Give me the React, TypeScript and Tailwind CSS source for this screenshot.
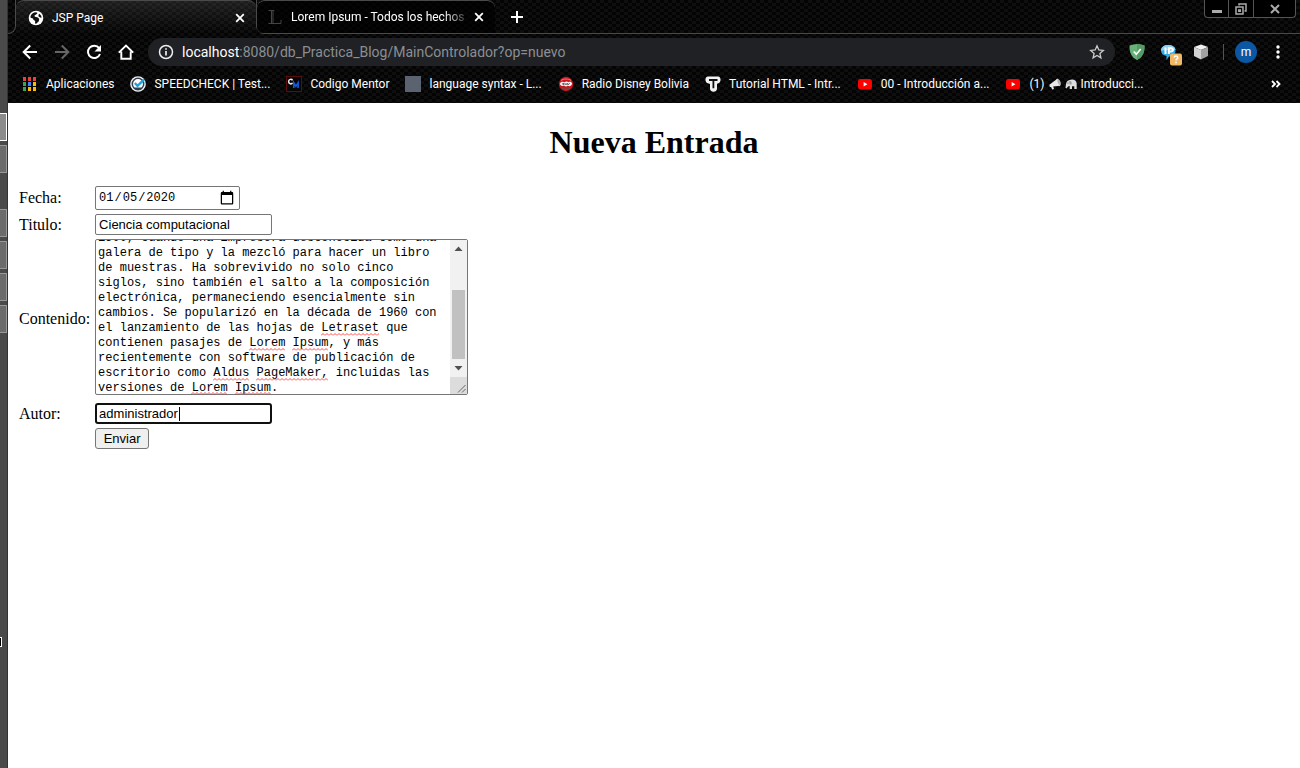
import { useLayoutEffect, useRef, type ReactNode } from "react";

const contenido =
  "Lorem Ipsum es simplemente el texto de relleno de las imprentas y archivos de texto. Lorem Ipsum ha sido el texto de relleno estándar de la industria desde el año\n1500, cuando una impresora desconocida como una galera de tipo y la mezcló para hacer un libro de muestras. Ha sobrevivido no solo cinco siglos, sino también el salto a la composición electrónica, permaneciendo esencialmente sin cambios. Se popularizó en la década de 1960 con el lanzamiento de las hojas de Letraset que contienen pasajes de Lorem Ipsum, y más recientemente con software de publicación de escritorio como Aldus PageMaker, incluidas las versiones de Lorem Ipsum.";

function GlobeIcon() {
  return (
    <svg className="size-4 shrink-0" viewBox="0 0 16 16" aria-hidden="true">
      <circle cx="8" cy="8" r="7.3" fill="#fff" />
      <path d="M2.500 6.200C3.200 4 5.200 2.400 8 2.300L9.600 3 8.200 4.600 6.600 5.200 6.800 6.800l2.600.4 1.800 1.600-.4 2.400-2.600 2.600-1.200-.2.200-2.600-1.800-1.200-.4-1.400-2.400-.6z" fill="#111" />
      <path d="M11.400 3.800l1.800 2 .4 2-1.600-.2-1.600-1.400.2-1.400z" fill="#111" />
    </svg>
  );
}

function CloseIcon() {
  return (
    <svg className="size-4" viewBox="0 0 16 16" fill="none" stroke="#fff" strokeWidth="1.8" aria-hidden="true">
      <path d="M4.2 4.2l7.6 7.6M11.8 4.2l-7.6 7.6" />
    </svg>
  );
}

function Tool({ label, children }: { label: string; children: ReactNode }) {
  return (
    <button type="button" aria-label={label} className="flex size-8 items-center justify-center">
      {children}
    </button>
  );
}

function YoutubeIcon() {
  return (
    <svg className="size-4" viewBox="0 0 16 16" aria-hidden="true">
      <rect x="1" y="3" width="14" height="10.5" rx="2.4" fill="#f00" />
      <path d="M6.6 6v4.400L10.400 8.200z" fill="#fff" />
    </svg>
  );
}

function AppsIcon() {
  const colors = ["#ea4335", "#ea4335", "#ea4335", "#34a853", "#4285f4", "#fbbc05", "#34a853", "#fbbc05", "#fbbc05"];
  return (
    <svg className="size-4" viewBox="0 0 16 16" aria-hidden="true">
      {colors.map((c, i) => (
        <rect key={i} x={1 + (i % 3) * 5} y={1 + Math.floor(i / 3) * 5} width="3" height="4" fill={c} />
      ))}
    </svg>
  );
}

function SpeedIcon() {
  return (
    <svg className="size-4" viewBox="0 0 16 16" aria-hidden="true">
      <circle cx="8" cy="8" r="7.8" fill="#f1f4f6" />
      <circle cx="8" cy="8" r="5.700" fill="#fff" stroke="#33414e" strokeWidth="1.500" />
      <path d="M4.800 7l2.700 2.800L14 3.600" fill="none" stroke="#1e9fe0" strokeWidth="2.400" />
      <path d="M4.500 12.400h7" stroke="#33414e" strokeWidth="1.800" />
    </svg>
  );
}

function MentorIcon() {
  return (
    <svg className="size-4" viewBox="0 0 16 16" fill="none" aria-hidden="true">
      <rect x=".5" y=".5" width="15" height="15" fill="#060606" stroke="#5c0c0c" />
      <path d="M6.500 4.300C5.700 2.700 2.600 3 2.600 5.600s3.100 3 3.900 1.200" stroke="#eee" strokeWidth="1.500" />
      <path d="M7.800 12V6.800l2.100 3.400 2.200-3.400V12" stroke="#1558d6" strokeWidth="1.700" />
    </svg>
  );
}

function RadioIcon() {
  return (
    <svg className="size-4" viewBox="0 0 16 16" fill="none" aria-hidden="true">
      <circle cx="8" cy="8" r="7.200" fill="#c9161d" />
      <path d="M3 4.500C5.500 2.500 10.500 2.500 13 4.500" stroke="#ef7b7e" />
      <path d="M1.800 7.800C3 5 5 5.500 6.500 6.200c1.500-1.200 3-.8 4 0 1.500-.8 3-.4 3.600 1.200-.4 2.600-2.600 3.200-4.200 2.400-1.400 1-2.800.8-3.800-.2-1.800.8-3.600.4-4.300-1.800z" fill="#f4f4f4" />
      <path d="M4 8.200l1.600-1v1.600L7 7.400l1 1.400 1.200-1.600.6 1.600L11.800 7.400" stroke="#444" strokeWidth=".9" />
      <path d="M4.500 12.200c2 1.400 5 1.400 7 0" stroke="#555" strokeWidth="1.400" />
    </svg>
  );
}

function TutorialIcon() {
  return (
    <svg className="size-4" viewBox="0 0 16 16" aria-hidden="true">
      <path d="M3 .5h10c3.400 0 3.400 6.500 0 6.800l-1 .6v4.800c0 3.900-7 3.900-7 0V8L3 7.300C-.4 7 -.4.5 3 .5z" fill="#f2f2f2" />
      <path d="M4 4h8.500M8.400 4v8.200" stroke="#111" strokeWidth="1.800" />
    </svg>
  );
}

function MegaphoneIcon() {
  return (
    <svg className="size-3" viewBox="0 0 12 12" aria-hidden="true">
      <path d="M.4 6.800 8 1l2.800 6.800L4.200 8.600l.8 2.400-1.800.5-1.100-2.600L.8 9z" fill="#e8e8e8" />
      <path d="M8 1c2.800.3 4.300 5 2.800 6.800C9.300 7.500 7.400 3.500 8 1z" fill="#aaa" stroke="#fff" strokeWidth=".6" />
    </svg>
  );
}

function ElephantIcon() {
  return (
    <svg className="size-3" viewBox="0 0 12 12" aria-hidden="true">
      <path d="M4 2.200c3-1.500 7.500-.8 7.700 3.500v5.200H9.300V8.200H7v2.700H4.700V8C3 8 2.600 9 1.500 10.600L.4 9.800C1.200 8 .3 3 4 2.200z" fill="#ddd" />
      <path d="M4.200 3.200c2-.6 3.100 1 2.200 3.300H4.600z" fill="#999" />
      <circle cx="3" cy="5" r=".5" fill="#222" />
    </svg>
  );
}

function Bookmark({ icon, children }: { icon: ReactNode; children: ReactNode }) {
  return (
    <a href="#" className="flex shrink-0 items-center gap-2 whitespace-nowrap">
      {icon}
      <span className="flex items-center gap-1">{children}</span>
    </a>
  );
}

const strip =
  "w-full border-y border-r border-[#999] bg-[#6b6b6b]";

function Squiggle({ className }: { className: string }) {
  return (
    <svg className={`pointer-events-none absolute h-[3px] ${className}`} aria-hidden="true">
      <defs>
        <pattern id="wave" width="4" height="3" patternUnits="userSpaceOnUse">
          <path d="M0 2.500 2 .5 4 2.500" fill="none" stroke="#f33" strokeWidth=".9" />
        </pattern>
      </defs>
      <rect width="100%" height="3" fill="url(#wave)" />
    </svg>
  );
}

const carbon =
  "bg-[#050505] bg-[conic-gradient(#040404_25%,#0e0e0e_0_50%,#040404_0_75%,#0e0e0e_0)] bg-[length:8px_6px]";

export default function App() {
  const area = useRef<HTMLTextAreaElement>(null);
  useLayoutEffect(() => {
    const el = area.current;
    if (el) el.scrollTop = el.scrollHeight - el.clientHeight - 6;
  }, []);

  return (
    <div className="flex min-h-screen bg-white">
      <aside className="flex w-2 shrink-0 flex-col border-r border-[#333] bg-[#4a4a4a] pt-[113px]">
        <div className="h-7 w-full border border-l-0 border-white bg-[#8c8c8c]" />
        <div className={`mt-1 h-7 ${strip}`} />
        <div className={`mt-9 h-7 ${strip}`} />
        <div className={`mt-1 h-7 ${strip}`} />
        <div className={`mt-1 h-7 ${strip}`} />
        <div className={`mt-1 h-7 ${strip}`} />
        <div className="mt-[304px] h-[10px] w-[2px] border border-l-0 border-white bg-black" />
      </aside>

      <div className="flex min-w-0 flex-1 flex-col">
        <header className={`font-[Roboto,'Noto_Sans',sans-serif] text-xs text-white ${carbon}`}>
          <div className="flex h-[34px] items-stretch">
            <div className="w-2 shrink-0 rounded-br-lg border-r border-b border-[#4a4a4a]" />
            <div className="flex w-60 shrink-0 items-center gap-2 rounded-t-lg border-t border-[#4a4a4a] bg-linear-to-b from-white/10 to-transparent pr-2 pl-3">
              <GlobeIcon />
              <span className="flex-1">JSP Page</span>
              <button type="button" aria-label="Cerrar pestaña"><CloseIcon /></button>
            </div>
            <div className="flex flex-1 items-stretch rounded-bl-lg border-b border-l border-[#4a4a4a]">
              <div className="flex w-[238px] shrink-0 items-center rounded-t-lg border-t border-[#4a4a4a] bg-black/60 pr-2 pl-[10px]">
                <svg className="mr-2 size-4 shrink-0" viewBox="0 0 16 16" fill="none" stroke="#444" aria-hidden="true">
                  <path d="M1.500 1.500h6M4.500 1.500v13M1.500 14.500h12.500v-3.500M6 1.500v13" />
                </svg>
                <span className="min-w-0 flex-1 overflow-hidden whitespace-nowrap [mask-image:linear-gradient(to_right,#000_85%,transparent)]">
                  Lorem Ipsum - Todos los hechos
                </span>
                <button type="button" aria-label="Cerrar pestaña"><CloseIcon /></button>
              </div>
              <button type="button" aria-label="Nueva pestaña" className="ml-2 flex w-7 items-center justify-center">
                <svg className="size-4" viewBox="0 0 16 16" stroke="#fff" strokeWidth="2" aria-hidden="true">
                  <path d="M8 2v12M2 8h12" />
                </svg>
              </button>
              <div className="mr-1 ml-auto flex h-[18px] rounded-b border border-t-0 border-[#555] bg-black">
                <button type="button" aria-label="Minimizar" className="flex w-6 items-center justify-center border-r border-[#555]">
                  <svg className="size-3" viewBox="0 0 12 12" aria-hidden="true"><path d="M1 7h10v3H1z" fill="#aaa" /></svg>
                </button>
                <button type="button" aria-label="Restaurar" className="flex w-[25px] items-center justify-center border-r border-[#555]">
                  <svg className="size-3" viewBox="0 0 12 12" fill="none" stroke="#aaa" strokeWidth="1.500" aria-hidden="true">
                    <path d="M1 4h7v7H1zM4 2.500V1h7v7H9.500M3.800 7h1.500v1.200H3.800z" />
                  </svg>
                </button>
                <button type="button" aria-label="Cerrar" className="flex w-[41px] items-center justify-center">
                  <svg className="size-3" viewBox="0 0 12 12" stroke="#aaa" strokeWidth="2" aria-hidden="true">
                    <path d="M2 2l8 8M10 2l-8 8" />
                  </svg>
                </button>
              </div>
            </div>
          </div>

          <div className="flex h-9 items-center pr-[6px] pl-[6px]">
            <Tool label="Atrás">
              <svg className="size-4" viewBox="0 0 16 16" fill="none" stroke="#fff" strokeWidth="2" aria-hidden="true"><path d="M15 8H2M8.200 1.500 1.700 8l6.500 6.500" /></svg>
            </Tool>
            <Tool label="Adelante">
              <svg className="size-4" viewBox="0 0 16 16" fill="none" stroke="#666" strokeWidth="2" aria-hidden="true"><path d="M1 8h13M7.800 1.500 14.300 8l-6.500 6.500" /></svg>
            </Tool>
            <Tool label="Recargar">
              <svg className="size-4" viewBox="0 0 16 16" aria-hidden="true">
                <path d="M13.200 4.200A6.200 6.200 0 1 0 14 10" fill="none" stroke="#fff" strokeWidth="2" />
                <path d="M15 1v6.500H8.500z" fill="#fff" />
              </svg>
            </Tool>
            <Tool label="Inicio">
              <svg className="size-4" viewBox="0 0 16 16" fill="none" stroke="#fff" strokeWidth="1.900" aria-hidden="true"><path d="M.8 8.600 8 1.500l7.200 7.100M3.300 7.500v7.300h9.400V7.500" /></svg>
            </Tool>
            <div className="ml-[6px] flex h-7 min-w-0 flex-1 items-center gap-2 rounded-full bg-[#202124] px-[10px]">
              <svg className="size-4 shrink-0" viewBox="0 0 16 16" fill="none" stroke="#eee" strokeWidth="1.500" aria-hidden="true">
                <circle cx="8" cy="8" r="6.500" />
                <path d="M8 7v4.500M8 4.300v1.500" strokeWidth="1.700" />
              </svg>
              <div className="min-w-0 flex-1 truncate text-sm leading-5 text-[#8b8f94]">
                <span className="text-white">localhost</span>:8080/db_Practica_Blog/MainControlador?op=nuevo
              </div>
              <button type="button" aria-label="Añadir a marcadores">
                <svg className="size-4" viewBox="0 0 16 16" fill="none" stroke="#ccc" strokeWidth="1.300" aria-hidden="true">
                  <path d="M8 1.800 9.800 6l4.500.4-3.400 3 1 4.400L8 11.500l-3.900 2.300 1-4.400-3.400-3L6.200 6z" />
                </svg>
              </button>
            </div>
            <div className="ml-[6px] flex items-center">
              <Tool label="Bloqueador">
                <svg className="size-4" viewBox="0 0 16 16" aria-hidden="true">
                  <path d="M8 0c2.500 0 5 .5 7.500 1.500C15.700 8 14 13 8 16 2 13 .3 8 .5 1.500 3 .5 5.500 0 8 0z" fill="#67b279" />
                  <path d="M8 0c2.500 0 5 .5 7.500 1.500C15.700 8 14 13 8 16z" fill="#559b67" />
                  <path d="M4.700 7.500 7.300 10.200 11.700 5" fill="none" stroke="#fff" strokeWidth="1.700" />
                </svg>
              </Tool>
              <Tool label="IP">
                <svg className="mt-2 ml-1 size-6" viewBox="0 0 24 24" aria-hidden="true">
                  <path d="M9 1c4.500 0 7.500 2 7.500 5.500S14 12 10 12.500L7.500 16v-4C4 11.500 2 9.500 2 6.500S4.500 1 9 1z" fill="#2fa9e4" />
                  <path d="M2 6.500C2 3 5 1 9 1s7.500 2 7.500 5z" fill="#8bd0f3" />
                  <path d="M6.500 3.500v6.500M9.800 10V4.200h2.200c2.600 0 2.600 3.200 0 3.200H9.800" stroke="#fff" strokeWidth="2" fill="none" />
                  <rect x="11" y="9.500" width="12" height="12" rx="2" fill="#efb867" />
                  <path d="M15.200 13.500c.2-2 3.600-1.800 3.600.2 0 1.200-1.800 1.200-1.800 2.800M17 17.700v1.500" stroke="#fff" strokeWidth="1.500" fill="none" />
                </svg>
              </Tool>
              <Tool label="Cubo">
                <svg className="size-4" viewBox="0 0 16 16" aria-hidden="true">
                  <path d="M8 .5 15 3 8 6 1 3z" fill="#f2f2f2" />
                  <path d="M1 3l7 3v9.500L1 12z" fill="#d2d2d2" />
                  <path d="M15 3 8 6v9.500L15 12z" fill="#a2a2a2" />
                </svg>
              </Tool>
            </div>
            <div className="mx-[6px] h-4 w-px bg-[#555]" />
            <Tool label="Perfil">
              <span className="flex size-[22px] items-center justify-center rounded-full bg-[#0b57a4] text-xs leading-none">m</span>
            </Tool>
            <Tool label="Menú">
              <svg className="size-4" viewBox="0 0 16 16" fill="#fff" aria-hidden="true">
                <circle cx="8" cy="3" r="1.700" /><circle cx="8" cy="8" r="1.700" /><circle cx="8" cy="13" r="1.700" />
              </svg>
            </Tool>
          </div>

          <nav className="flex h-[33px] items-center gap-4 pr-[18px] pb-[6px] pl-[14px]">
            <Bookmark icon={<AppsIcon />}>Aplicaciones</Bookmark>
            <Bookmark icon={<SpeedIcon />}>SPEEDCHECK | Test...</Bookmark>
            <Bookmark icon={<MentorIcon />}>Codigo Mentor</Bookmark>
            <Bookmark icon={<span className="size-4 bg-[#5b6270]" />}>language syntax - L...</Bookmark>
            <Bookmark icon={<RadioIcon />}>Radio Disney Bolivia</Bookmark>
            <Bookmark icon={<TutorialIcon />}>Tutorial HTML - Intr...</Bookmark>
            <Bookmark icon={<YoutubeIcon />}>00 - Introducción a...</Bookmark>
            <Bookmark icon={<YoutubeIcon />}>(1) <MegaphoneIcon /> <ElephantIcon /> Introducci...</Bookmark>
            <button type="button" aria-label="Más marcadores" className="ml-auto">
              <svg className="size-3" viewBox="0 0 12 12" fill="none" stroke="#fff" strokeWidth="1.800" aria-hidden="true"><path d="M2 3 5 6 2 9M6.500 3l3 3-3 3" /></svg>
            </button>
          </nav>
        </header>

        <main className="px-2 font-['Liberation_Serif',serif] text-base text-black">
          <h1 className="mt-[21px] text-center text-[32px] leading-9 font-bold">Nueva Entrada</h1>
          <form className="mt-[23px]">
            <table className="border-separate border-spacing-[2px]">
              <tbody>
                <tr>
                  <td className="p-px"><label htmlFor="fecha">Fecha:</label></td>
                  <td className="p-px">
                    <input id="fecha" type="date" defaultValue="2020-01-05" className="block h-6 w-[145px] rounded-xs border border-[#767676] pr-1 pl-0.5 font-['Liberation_Mono',monospace] text-xs [&::-webkit-calendar-picker-indicator]:size-4 [&::-webkit-calendar-picker-indicator]:p-0" />
                  </td>
                </tr>
                <tr>
                  <td className="p-px"><label htmlFor="titulo" className="block leading-5">Titulo:</label></td>
                  <td className="p-px">
                    <input id="titulo" type="text" defaultValue="Ciencia computacional" className="block h-[21px] w-[177px] rounded-xs border border-[#767676] px-[3px] font-['Liberation_Sans',sans-serif] text-[13px]" />
                  </td>
                </tr>
                <tr>
                  <td className="p-px pr-0.5"><label htmlFor="contenido">Contenido:</label></td>
                  <td className="p-px pb-[5px]">
                    <div className="relative flex h-[156px] w-[373px] rounded-xs border border-[#767676]">
                      <textarea
                        id="contenido"
                        ref={area}
                        defaultValue={contenido}
                        className="min-w-0 flex-1 resize-none px-0.5 pt-0.5 pb-1 font-['Liberation_Mono',monospace] text-xs leading-[15px] outline-none [scrollbar-width:none]"
                      />
                      <Squiggle className="top-[93px] left-[225px] w-[58px]" />
                      <Squiggle className="top-[108px] left-[153px] w-9" />
                      <Squiggle className="top-[108px] left-[196px] w-9" />
                      <Squiggle className="top-[138px] left-[117px] w-9" />
                      <Squiggle className="top-[138px] left-[160px] w-[72px]" />
                      <Squiggle className="top-[152px] left-[95px] w-9" />
                      <Squiggle className="top-[152px] left-[139px] w-9" />
                      <div className="flex w-[17px] flex-col items-center bg-[#f1f1f1]" aria-hidden="true">
                        <svg className="h-[17px] w-[17px]" viewBox="0 0 17 17"><path d="M8.500 6.500 12.500 11h-8z" fill="#505050" /></svg>
                        <div className="mt-[33px] h-[69px] w-[13px] bg-[#c1c1c1]" />
                        <svg className="h-[17px] w-[17px]" viewBox="0 0 17 17"><path d="M4.500 7h8l-4 4.500z" fill="#505050" /></svg>
                        <svg className="mt-auto h-[17px] w-[17px] bg-[#dcdcdc]" viewBox="0 0 17 17"><path d="M8 15.500 15.500 8M12 15.500l3.500-3.500" stroke="#666" /></svg>
                      </div>
                    </div>
                  </td>
                </tr>
                <tr>
                  <td className="p-px"><label htmlFor="autor" className="block leading-5">Autor:</label></td>
                  <td className="p-px">
                    <div className="relative w-[177px]">
                      <input id="autor" type="text" defaultValue="administrador" className="block h-[21px] w-full rounded-[3px] border-2 border-[#101010] px-0.5 font-['Liberation_Sans',sans-serif] text-[13px] outline-none" />
                      <span className="absolute top-1 left-[84px] h-[14px] w-px bg-black" />
                    </div>
                  </td>
                </tr>
                <tr>
                  <td className="p-px" />
                  <td className="p-px">
                    <button type="button" className="block h-[21px] w-[54px] rounded-[3px] border border-[#767676] bg-[#efefef] font-['Liberation_Sans',sans-serif] text-[13px] leading-none">Enviar</button>
                  </td>
                </tr>
              </tbody>
            </table>
          </form>
        </main>
      </div>
    </div>
  );
}
